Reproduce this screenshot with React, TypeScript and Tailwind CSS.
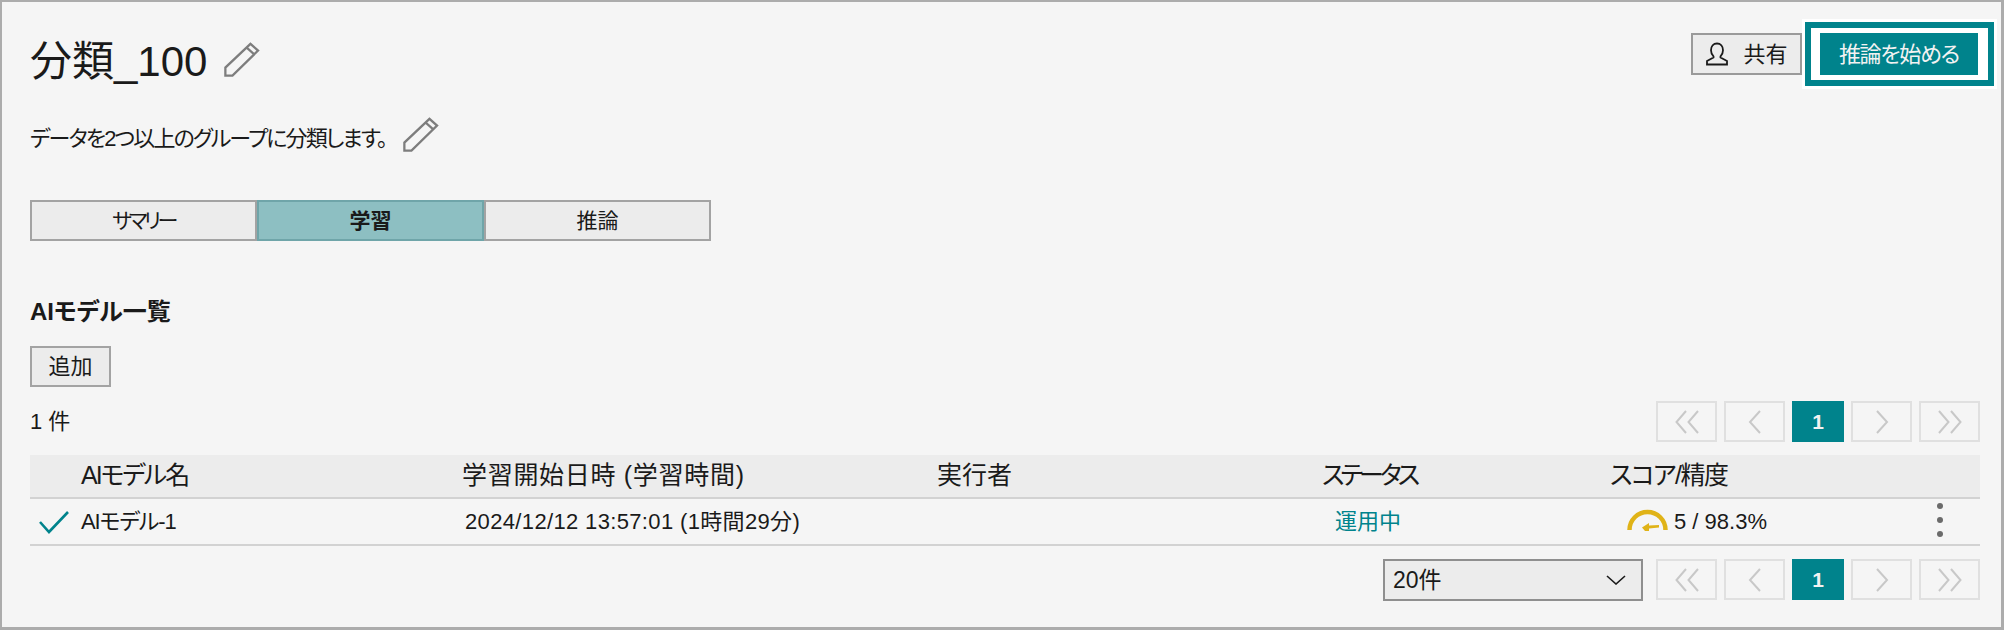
const font = "font-['Liberation_Sans','Noto_Sans_CJK_JP',sans-serif] [font-feature-settings:'palt']";

const PencilIcon = ({ className }: { className: string }) => (
  <svg viewBox="0 0 40 38" className={className} fill="none" stroke="#7d7d7d" strokeWidth="2.4">
    <path d="M3.5 35.5 L3.5 27 L30 2 L38 9 L11 35.5 Z" />
    <path d="M26 6 L34 13" />
  </svg>
);

const PageBox = ({ d, w }: { d: string; w: number }) => (
  <div className="flex h-[41px] w-[61px] items-center justify-center border-2 border-[#e0e0e0]">
    <svg width={w} height="24" viewBox={`0 0 ${w} 24`} fill="none" stroke="#c8c8c8" strokeWidth="2">
      <path d={d} />
    </svg>
  </div>
);

const Pager = () => (
  <div className="flex gap-[7px]">
    <PageBox w={24} d="M11 1 L1.5 12 L11 23 M23 1 L13.5 12 L23 23" />
    <PageBox w={14} d="M12 1 L2 12 L12 23" />
    <div className="flex h-[41px] w-[52px] items-center justify-center bg-[#00838c] text-[21px] font-bold text-[#f2f2f2]">
      1
    </div>
    <PageBox w={14} d="M2 1 L12 12 L2 23" />
    <PageBox w={24} d="M1 1 L10.5 12 L1 23 M13 1 L22.5 12 L13 23" />
  </div>
);

const tabs = [
  { label: "サマリー", active: false, text: "tracking-[-3.5px]" },
  { label: "学習", active: true, text: "" },
  { label: "推論", active: false, text: "" },
];

export default function App() {
  return (
    <div className={`${font} h-[630px] w-[2004px] border-2 border-r-[3px] border-b-[3px] border-[#acacac] bg-[#f5f5f5] text-[#1a1a1a]`}>
      <div className="flex justify-between pr-[4px] pl-[28px]">
        {/* Title block */}
        <div className="pt-[37px]">
          <div className="flex items-center">
            <h1 className="text-[42px] leading-[46px] font-normal">分類_100</h1>
            <PencilIcon className="mt-[-4px] ml-[15px] h-[36px] w-[38px]" />
          </div>
          <div className="mt-[36px] flex items-center">
            <p className="text-[22px] leading-[36px] tracking-[-1.9px]">データを2つ以上のグループに分類します。</p>
            <PencilIcon className="mt-[-9px] ml-[15px] h-[36px] w-[38px]" />
          </div>
        </div>

        {/* Top actions */}
        <div className="flex items-start pt-[17px]">
          <button className="mt-[14px] flex h-[42px] w-[111px] items-center justify-center gap-[14px] border-2 border-[#9a9a9a] bg-[#ececec] text-[22px]">
            <svg viewBox="0 0 24 24" className="h-[24px] w-[24px]" fill="none" stroke="#1a1a1a" strokeWidth="1.8">
              <path d="M12 1.5c-3.5 0-6 2.8-6 6.8 0 2.6 1 4.6 2.5 6v1.2L2 19v3.5h20V19l-6.5-3.5v-1.2c1.5-1.4 2.5-3.4 2.5-6 0-4-2.5-6.8-6-6.8z" />
            </svg>
            共有
          </button>
          <div className="border-[3px] border-white">
            <div className="border-[6px] border-[#00838c] bg-white pt-[5px] pr-[10px] pb-[5px] pl-[9px]">
              <div className="flex h-[42px] w-[158px] items-center justify-center bg-[#00838c] text-[22px] tracking-[-1.3px] text-[#f2f2f2]">
                推論を始める
              </div>
            </div>
          </div>
        </div>
      </div>

      <div className="pr-[21px] pl-[28px]">
        {/* Tabs */}
        <div className="mt-[43px] flex w-[681px] text-[21px]">
          {tabs.map((t) => (
            <div
              key={t.label}
              className={
                t.active
                  ? "flex h-[41px] flex-1 items-center justify-center border-2 border-[#6fa5a9] bg-[#8dbfc2] font-bold"
                  : "flex h-[41px] flex-1 items-center justify-center border-2 border-[#a3a3a3] bg-[#ececec]"
              }
            >
              <span className={t.text}>{t.label}</span>
            </div>
          ))}
        </div>

        <h2 className="mt-[55px] text-[24px] leading-[32px] font-bold">AIモデル一覧</h2>

        <button className="mt-[18px] flex h-[41px] w-[81px] items-center justify-center border-2 border-[#a3a3a3] bg-[#ececec] text-[22px]">
          追加
        </button>

        <div className="mt-[14px] flex items-center justify-between">
          <span className="text-[22px]">1 件</span>
          <Pager />
        </div>

        {/* Model table */}
        <div className="mt-[13px] grid grid-cols-[51px_381px_475px_385px_288px_1fr] text-[25px]">
          <div className="col-span-6 grid h-[44px] grid-cols-subgrid items-center border-b-2 border-[#d2d2d2] bg-[#ececec]">
            <div />
            <div className="tracking-[-2px]">AIモデル名</div>
            <div className="tracking-[0.7px]">学習開始日時 (学習時間)</div>
            <div>実行者</div>
            <div className="tracking-[-4px]">ステータス</div>
            <div className="tracking-[-1.5px]">スコア/精度</div>
          </div>
          <div className="relative col-span-6 grid h-[47px] grid-cols-subgrid items-center border-b-2 border-[#d2d2d2] text-[22px]">
            <svg viewBox="0 0 32 24" className="ml-[8px] h-[24px] w-[32px]" fill="none" stroke="#00838c" strokeWidth="2.6">
              <path d="M2 12 L11 22 L30 2" />
            </svg>
            <div className="tracking-[-1.1px]">AIモデル-1</div>
            <div className="pl-[3px] tracking-[0.35px]">2024/12/12 13:57:01 (1時間29分)</div>
            <div />
            <div className="pl-[13px] text-[#00838c]">運用中</div>
            <div className="flex items-center pl-[17px]">
              <svg viewBox="0 0 42 24" className="mt-[-5px] h-[24px] w-[42px]" fill="none">
                <path d="M2.5 23 A18 18 0 0 1 38.5 23" stroke="#e0b317" strokeWidth="4.5" />
                <path d="M15 20.5 L22 16 L22 18.5 L32 18 L32 20.5 L22 21.5 L22 24 L18 24 Z" fill="#e0b317" />
              </svg>
              <span className="ml-[5px]">5 / 98.3%</span>
            </div>
            <div className="absolute top-[4px] right-[37px] flex flex-col gap-[8px]">
              <span className="h-[6px] w-[6px] rounded-full bg-[#6b6b6b]" />
              <span className="h-[6px] w-[6px] rounded-full bg-[#6b6b6b]" />
              <span className="h-[6px] w-[6px] rounded-full bg-[#6b6b6b]" />
            </div>
          </div>
        </div>

        <div className="mt-[13px] flex justify-end gap-[13px]">
          <div className="flex h-[42px] w-[260px] items-center justify-between border-2 border-[#8f8f8f] bg-[#ececec] pr-[15px] pl-[8px] text-[23px]">
            20件
            <svg viewBox="0 0 20 10" className="h-[10px] w-[20px]" fill="none" stroke="#1a1a1a" strokeWidth="1.6">
              <path d="M1 1 L10 9 L19 1" />
            </svg>
          </div>
          <Pager />
        </div>
      </div>
    </div>
  );
}
